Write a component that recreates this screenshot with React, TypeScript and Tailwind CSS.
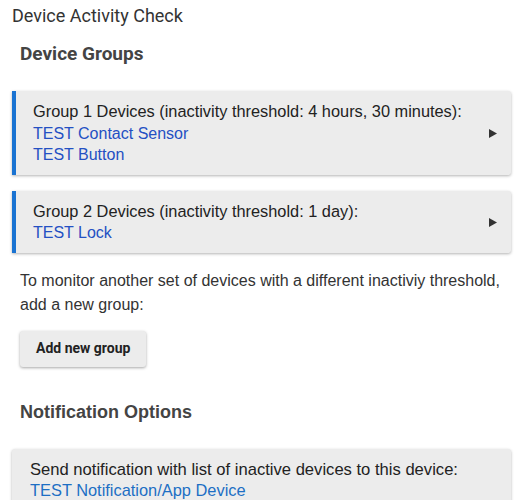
import React from "react";

const sans = { fontFamily: '"Liberation Sans", Arial, sans-serif' };
const roboto = { fontFamily: 'Roboto, "Liberation Sans", Arial, sans-serif' };

function Arrow() {
  return (
    <svg width="8" height="9" viewBox="0 0 8 9" className="shrink-0">
      <path d="M0 0 L8 4.5 L0 9 Z" fill="#333" />
    </svg>
  );
}

function GroupCard({ title, devices }: { title: string; devices: string[] }) {
  return (
    <div className="mx-3 flex items-center rounded-r-[3px] border-l-4 border-[#1a73d2] bg-[#ececec] pl-[17px] pr-[14px] pt-[10px] pb-[9px] shadow-[0_1px_3px_rgba(0,0,0,0.3)]">
      <div className="flex-1 text-[16px] leading-[21.5px] text-[#222]" style={sans}>
        <div className="text-[16.35px]">{title}</div>
        {devices.map((d) => (
          <div key={d} className="text-[#2450c3]">
            {d}
          </div>
        ))}
      </div>
      <Arrow />
    </div>
  );
}

export default function App() {
  return (
    <div className="min-h-[500px] w-[523px] overflow-hidden bg-white">
      <div className="px-3 pt-[5px] text-[18px] leading-[22px] text-[#333]" style={roboto}>
        Device Activity Check
      </div>
      <div className="mt-[17px] px-5 text-[19px] font-bold leading-[20px] text-[#444]" style={roboto}>
        Device Groups
      </div>
      <div className="mt-[27px] flex flex-col gap-4">
        <GroupCard
          title="Group 1 Devices (inactivity threshold: 4 hours, 30 minutes):"
          devices={["TEST Contact Sensor", "TEST Button"]}
        />
        <GroupCard title="Group 2 Devices (inactivity threshold: 1 day):" devices={["TEST Lock"]} />
      </div>
      <p className="mt-[16px] px-5 text-[16px] leading-[24px] text-[#333]" style={sans}>
        To monitor another set of devices with a different inactiviy threshold, add a new group:
      </p>
      <div className="px-5 pt-[14px]">
        <button
          className="h-[36px] rounded-[3px] bg-[#ececec] px-4 text-[14px] font-bold text-[#222] shadow-[0_1px_3px_rgba(0,0,0,0.35)]"
          style={roboto}
        >
          Add new group
        </button>
      </div>
      <div className="mt-[35px] px-5 text-[18px] font-bold leading-[20px] text-[#444]" style={sans}>
        Notification Options
      </div>
      <div className="mx-3 mt-[27px] rounded-[3px] bg-[#ececec] px-[18px] pt-[10px] pb-3 shadow-[0_1px_3px_rgba(0,0,0,0.3)]">
        <div className="text-[16.6px] leading-[21.5px] text-[#222]" style={sans}>
          Send notification with list of inactive devices to this device:
        </div>
        <div className="text-[16.4px] leading-[21.5px] text-[#1d6fc4]" style={sans}>
          TEST Notification/App Device
        </div>
      </div>
    </div>
  );
}
